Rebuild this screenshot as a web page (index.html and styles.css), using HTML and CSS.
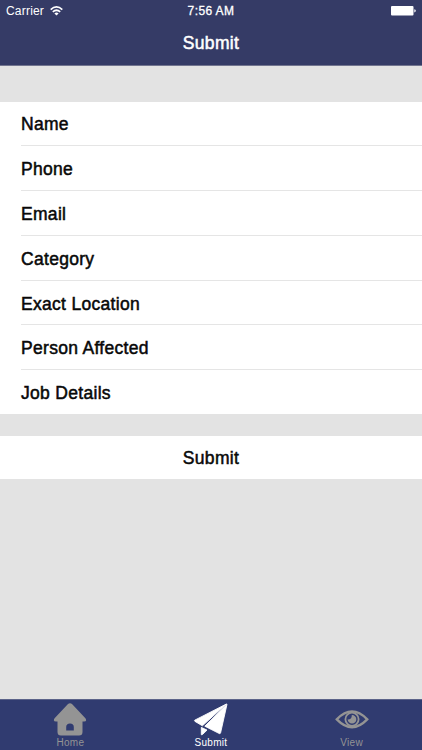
FILE: index.html
```
<!DOCTYPE html>
<html lang="en">
<head>
<meta charset="utf-8">
<title>Submit</title>
<link rel="stylesheet" href="styles.css">
</head>
<body>
<header class="top">
  <div class="status">
    <div class="carrier"><span>Carrier</span>
      <svg class="wifi" width="13" height="10" viewBox="0 0 13 10" fill="none" stroke="#fff" stroke-width="1.7"><path d="M.7 3.6Q6.5-1.8 12.3 3.6M2.8 5.9Q6.5 2.6 10.2 5.9"/><path d="M6.5 9.6L4.4 7.5Q6.5 5.7 8.6 7.5Z" fill="#fff" stroke="none"/></svg>
    </div>
    <div class="time">7:56 AM</div>
    <svg class="battery" width="25" height="10" viewBox="0 0 25 10" fill="#fff"><rect width="22.5" height="9.6" rx="1"/><path d="M23.3 3.2Q24.8 3.4 24.8 4.8T23.3 6.4Z"/></svg>
  </div>
  <h1 class="title medium">Submit</h1>
</header>
<main class="content">
  <ul class="list medium">
    <li class="row">Name</li>
    <li class="row">Phone</li>
    <li class="row">Email</li>
    <li class="row">Category</li>
    <li class="row">Exact Location</li>
    <li class="row">Person Affected</li>
    <li class="row">Job Details</li>
  </ul>
  <div class="submit medium">Submit</div>
</main>
<nav class="tabs">
  <div class="tab">
    <svg width="36" height="34" viewBox="0 0 36 34" fill="#949494"><path d="M16 1Q18 -.6 20 1L33.4 15.2Q35.4 18.5 32 18.5H30.5V29Q30.5 32.5 27 32.5H9Q5.5 32.5 5.5 29V18.5H4Q.6 18.5 2.6 15.2ZM14.2 27.5H21.8V24Q21.8 20.5 18 20.5T14.2 24Z" fill-rule="evenodd"/></svg>
    <span>Home</span>
  </div>
  <div class="tab active">
    <svg width="36" height="34" viewBox="0 0 36 34" fill="#fff" stroke="#fff" stroke-width=".9" stroke-linejoin="round"><path d="M33.4 1L1.7 17.2Q1.2 17.9 2 18.4L9.4 22.8Z"/><path d="M34 1.2L11.8 23.2L26.4 30.6Q27.3 30.8 27.6 29.8Z"/><path d="M8.3 24.4V31.4Q8.5 32.3 9.4 31.6L14 27.1Z"/></svg>
    <span>Submit</span>
  </div>
  <div class="tab">
    <svg width="36" height="34" viewBox="0 0 36 34" fill="none" stroke="#949494"><path d="M2.8 16.3Q10.5 8.4 18 8.4T33.2 16.3Q25.5 24.2 18 24.2T2.8 16.3Z" stroke-width="2.4"/><circle cx="18" cy="16.3" r="6.6" stroke-width="1.8"/><path d="M17.8 12A4.3 4.3 0 1 1 13.7 16.3Q17.8 17 17.8 12Z" fill="#949494" stroke="none"/></svg>
    <span>View</span>
  </div>
</nav>
</body>
</html>
```
FILE: styles.css
```
* { box-sizing: border-box; }
body {
  margin: 0;
  height: 750px;
  display: flex;
  flex-direction: column;
  background: #e3e3e3;
  font-family: "Liberation Sans", sans-serif;
  overflow: hidden;
}
.medium {
  font-size: 17.5px;
  font-weight: 400;
  letter-spacing: .3px;
  -webkit-text-stroke: .5px currentColor;
}
.top {
  height: 66px;
  background: #353b66;
  color: #fff;
  border-bottom: 1px solid #72758f;
}
.status {
  height: 22px;
  display: grid;
  grid-template-columns: 1fr auto 1fr;
  align-items: center;
  padding: 0 6px;
  font-size: 12px;
}
.carrier { display: flex; align-items: center; gap: 6px; letter-spacing: .2px; }
.wifi { margin-top: -1px; }
.time { -webkit-text-stroke: .3px currentColor; letter-spacing: .4px; }
.battery { justify-self: end; }
.title { margin: 0; line-height: 43px; text-align: center; }
.content { flex: 1; padding-top: 36px; }
.list {
  margin: 0 0 21.5px;
  padding: 0 0 0 21px;
  list-style: none;
  background: #fff;
  color: #080808;
}
.row {
  height: 44.8px;
  line-height: 46.4px;
  border-bottom: 1px solid #e5e5e5;
}
.row:first-child { height: 44.2px; line-height: 45px; }
.row:last-child { border-bottom: 0; height: 44px; }
.submit {
  height: 43.5px;
  line-height: 45px;
  text-align: center;
  background: #fff;
  color: #080808;
}
.tabs {
  height: 51px;
  display: grid;
  grid-template-columns: repeat(3, 1fr);
  background: #303b70;
  border-top: 1px solid #5b6389;
}
.tab {
  display: flex;
  flex-direction: column;
  align-items: center;
  padding-top: 3px;
  color: #949494;
  font-size: 10px;
  line-height: 12px;
  letter-spacing: .3px;
}
.active { color: #fff; }
```
